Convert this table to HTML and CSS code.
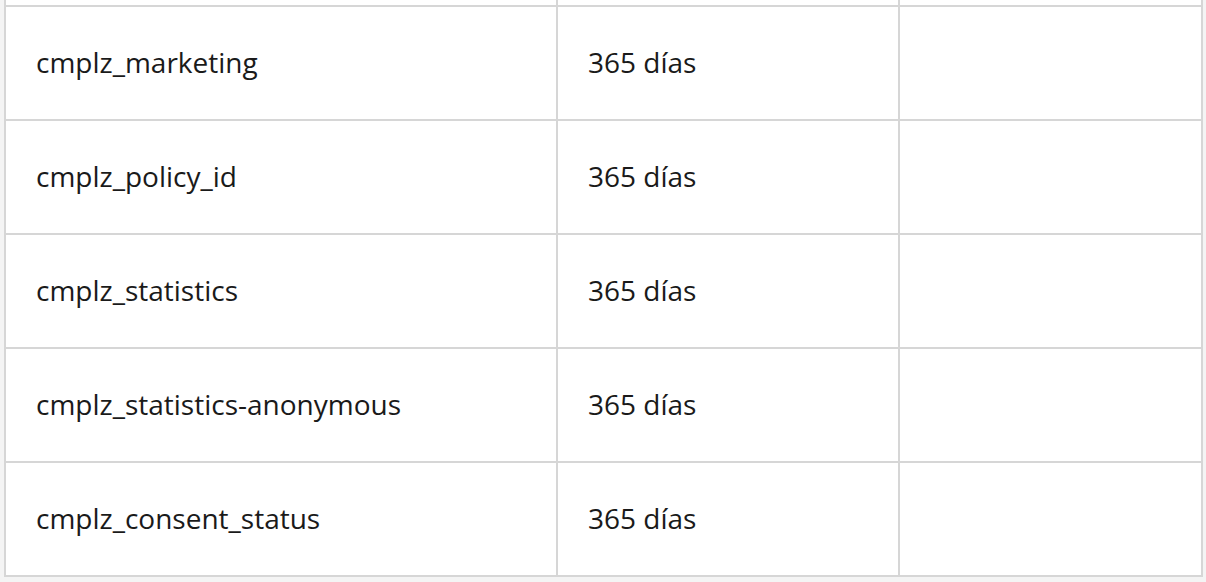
FILE: index.html
```html
<!DOCTYPE html>
<html lang="es">
<head>
<meta charset="utf-8">
<link rel="stylesheet" href="styles.css">
</head>
<body>
<div class="wrap">
<table class="cookies">
<tbody>
<tr class="prev"><td></td><td></td><td></td></tr>
<tr><td>cmplz_marketing</td><td>365 días</td><td></td></tr>
<tr><td>cmplz_policy_id</td><td>365 días</td><td></td></tr>
<tr><td>cmplz_statistics</td><td>365 días</td><td></td></tr>
<tr><td>cmplz_statistics-anonymous</td><td>365 días</td><td></td></tr>
<tr><td>cmplz_consent_status</td><td>365 días</td><td></td></tr>
</tbody>
</table>
</div>
</body>
</html>
```
FILE: styles.css
```css
html, body {
  margin: 0;
  padding: 0;
  background: #f4f4f4;
}
.wrap {
  height: 582px;
  overflow: hidden;
  padding: 0 3px 0 4px;
  display: flex;
  flex-direction: column;
  justify-content: flex-end;
}
.cookies {
  width: 100%;
  border-collapse: collapse;
  background: #fff;
  font-family: "Open Sans", sans-serif;
  font-size: 28px;
  color: #1a1a1a;
  margin-bottom: 5px;
}
.cookies td {
  border: 2px solid #d6d6d6;
  height: 114px;
  padding: 0 30px 2px 30px;
  box-sizing: border-box;
  vertical-align: middle;
  white-space: nowrap;
}
.cookies td:nth-child(1) { width: 552px; }
.cookies td:nth-child(2) { width: 342px; }
```
